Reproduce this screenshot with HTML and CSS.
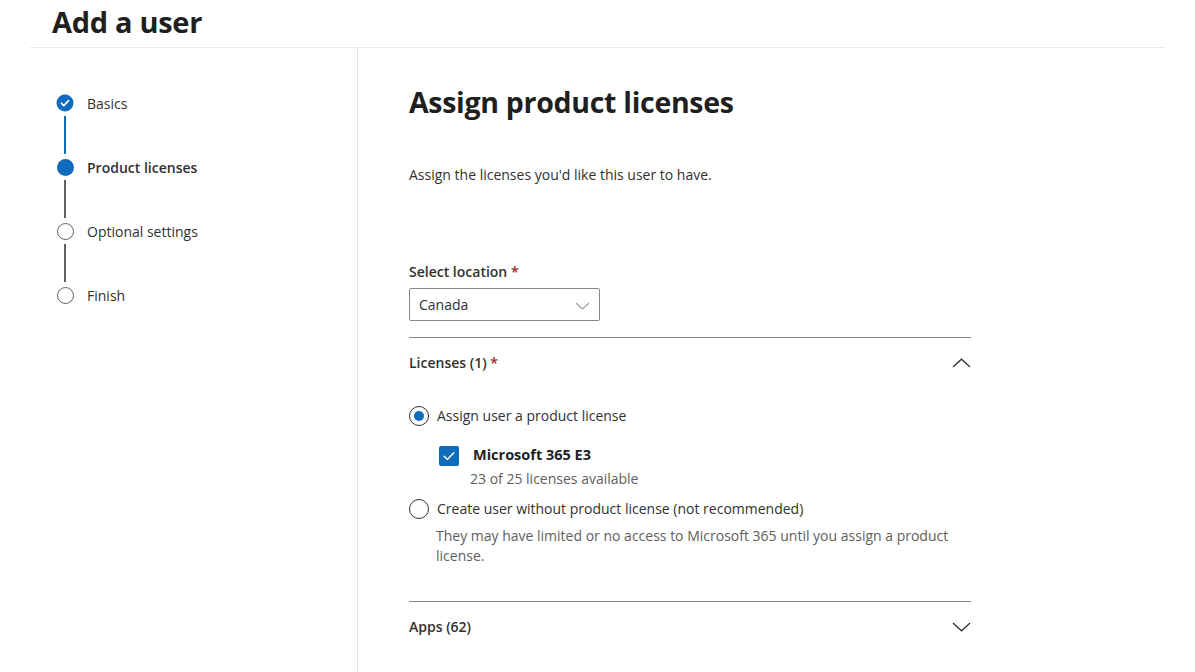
FILE: index.html
```html
<!DOCTYPE html>
<html lang="en">
<head>
<meta charset="utf-8">
<title>Add a user</title>
<link rel="stylesheet" href="styles.css">
</head>
<body>
<header class="page-header">
  <h1 class="page-title">Add a user</h1>
</header>
<div class="layout">
  <nav class="stepper">
    <div class="step done">
      <div class="indicator">
        <span class="dot dot-done">
          <svg viewBox="0 0 18 18" width="18" height="18"><circle cx="9" cy="9" r="8.5" fill="#0f6cbd"/><path d="M5.3 9.2 L7.8 11.6 L12.6 6.6" fill="none" stroke="#fff" stroke-width="1.6" stroke-linecap="round" stroke-linejoin="round"/></svg>
        </span>
        <span class="connector connector-blue"></span>
      </div>
      <span class="step-label">Basics</span>
    </div>
    <div class="step current">
      <div class="indicator">
        <span class="dot dot-current"></span>
        <span class="connector"></span>
      </div>
      <span class="step-label step-label-bold">Product licenses</span>
    </div>
    <div class="step">
      <div class="indicator">
        <span class="dot dot-empty"></span>
        <span class="connector"></span>
      </div>
      <span class="step-label">Optional settings</span>
    </div>
    <div class="step last">
      <div class="indicator">
        <span class="dot dot-empty"></span>
      </div>
      <span class="step-label">Finish</span>
    </div>
  </nav>
  <main class="content">
    <h2 class="content-title">Assign product licenses</h2>
    <p class="intro">Assign the licenses you'd like this user to have.</p>

    <div class="field">
      <label class="field-label">Select location <span class="req">*</span></label>
      <div class="select">
        <span>Canada</span>
        <svg class="select-chevron" viewBox="0 0 16 8" width="15" height="8"><path d="M1 1 L8 7 L15 1" fill="none" stroke="#8a8886" stroke-width="1.1"/></svg>
      </div>
    </div>

    <section class="accordion">
      <div class="acc-head">
        <span class="acc-title">Licenses (1) <span class="req">*</span></span>
        <svg class="acc-chevron" viewBox="0 0 20 10" width="19" height="10"><path d="M1 9.2 L10 1 L19 9.2" fill="none" stroke="#323130" stroke-width="1.3"/></svg>
      </div>
      <div class="acc-body">
        <div class="radio-row">
          <span class="radio radio-on"><span class="radio-dot"></span></span>
          <span class="radio-label">Assign user a product license</span>
        </div>
        <div class="license">
          <span class="checkbox">
            <svg viewBox="0 0 20 20" width="20" height="20"><path d="M5.2 10.3 L8.4 13.4 L14.8 6.8" fill="none" stroke="#fff" stroke-width="1.4" stroke-linecap="round" stroke-linejoin="round"/></svg>
          </span>
          <div class="license-text">
            <span class="license-name">Microsoft 365 E3</span>
            <span class="license-count">23 of 25 licenses available</span>
          </div>
        </div>
        <div class="radio-row">
          <span class="radio"></span>
          <span class="radio-label">Create user without product license (not recommended)</span>
        </div>
        <p class="radio-desc">They may have limited or no access to Microsoft 365 until you assign a product license.</p>
      </div>
    </section>

    <section class="accordion">
      <div class="acc-head">
        <span class="acc-title">Apps (62)</span>
        <svg class="acc-chevron" viewBox="0 0 20 10" width="19" height="10"><path d="M1 0.8 L10 9 L19 0.8" fill="none" stroke="#323130" stroke-width="1.3"/></svg>
      </div>
    </section>
  </main>
</div>
</body>
</html>
```
FILE: styles.css
```css
* { box-sizing: border-box; }
html, body { margin: 0; padding: 0; background: #fff; }
body {
  font-family: "Open Sans", "Noto Sans", "Liberation Sans", sans-serif;
  color: #323130;
  font-size: 14px;
  width: 1195px;
  height: 672px;
  overflow: hidden;
}
.page-header {
  margin: 0 30px;
  border-bottom: 1px solid #edebe9;
  height: 48px;
  padding-left: 22px;
}
.page-title {
  margin: 0;
  font-size: 29px;
  font-weight: 700;
  line-height: 44px;
  color: #201f1e;
  letter-spacing: -0.3px;
}
.layout {
  display: flex;
  height: 624px;
}
.stepper {
  width: 358px;
  border-right: 1px solid #e1dfdd;
  padding: 46px 0 0 56px;
  display: flex;
  flex-direction: column;
}
.step {
  display: flex;
  gap: 13px;
  align-items: flex-start;
}
.indicator {
  width: 18px;
  display: flex;
  flex-direction: column;
  align-items: center;
}
.dot {
  width: 18px;
  height: 18px;
  display: block;
  border-radius: 50%;
}
.dot svg { display: block; }
.dot-current { background: #0f6cbd; width: 17px; height: 17px; margin: 0.5px; }
.dot-empty { border: 1.6px solid #616161; width: 17px; height: 17px; margin: 0.5px; }
.connector {
  width: 2px;
  height: 38px;
  margin: 4px 0 4px;
  background: #616161;
}
.connector-blue { background: #0f6cbd; }
.step-label {
  font-size: 14px;
  line-height: 18px;
  color: #323130;
  padding-top: 1px;
}
.step-label-bold { font-weight: 600; }

.content {
  flex: 1;
  padding: 36px 0 0 51px;
}
.content-title {
  margin: 0;
  font-size: 28.5px;
  font-weight: 700;
  line-height: 36px;
  color: #201f1e;
  letter-spacing: -0.3px;
}
.intro {
  margin: 45px 0 0;
  font-size: 14px;
  line-height: 20px;
}
.field { margin-top: 77px; }
.field-label {
  display: block;
  font-size: 14px;
  font-weight: 600;
  line-height: 20px;
}
.req { color: #a4262c; font-weight: 600; }
.select {
  margin-top: 6px;
  width: 191px;
  height: 33px;
  border: 1px solid #8a8886;
  border-radius: 2px;
  display: flex;
  align-items: center;
  justify-content: space-between;
  padding: 0 9px 0 9px;
  font-size: 14px;
}
.select-chevron { display: block; margin-top: 2px; }
.accordion {
  width: 562px;
  border-top: 1px solid #8a8886;
}
.field + .accordion { margin-top: 16px; }
.acc-head {
  height: 49px;
  display: flex;
  align-items: center;
  justify-content: space-between;
}
.acc-title {
  font-size: 14px;
  font-weight: 600;
  line-height: 20px;
}
.acc-chevron { display: block; }
.acc-body {
  padding-top: 18px;
  padding-bottom: 35px;
}
.radio-row {
  display: flex;
  align-items: center;
  gap: 8px;
  height: 22px;
}
.radio {
  width: 20px;
  height: 20px;
  border: 1px solid #323130;
  border-radius: 50%;
  display: flex;
  align-items: center;
  justify-content: center;
  flex: none;
}
.radio-on { border-color: #323130; }
.radio-dot {
  width: 10px;
  height: 10px;
  border-radius: 50%;
  background: #0f6cbd;
}
.radio-label {
  font-size: 14px;
  line-height: 20px;
}
.license {
  display: flex;
  gap: 14px;
  margin: 18px 0 9px 30px;
}
.checkbox {
  width: 20px;
  height: 20px;
  background: #0f6cbd;
  border-radius: 2px;
  flex: none;
  margin-top: 1px;
}
.checkbox svg { display: block; }
.license-text {
  display: flex;
  flex-direction: column;
}
.license-name {
  font-size: 14.5px;
  font-weight: 700;
  line-height: 20px;
  color: #201f1e;
}
.license-count {
  font-size: 14px;
  line-height: 20px;
  color: #605e5c;
  margin-left: -3px;
  margin-top: 4px;
}
.radio-desc {
  margin: 6px 0 0 27px;
  font-size: 14px;
  line-height: 20px;
  color: #605e5c;
  width: 535px;
}
```
